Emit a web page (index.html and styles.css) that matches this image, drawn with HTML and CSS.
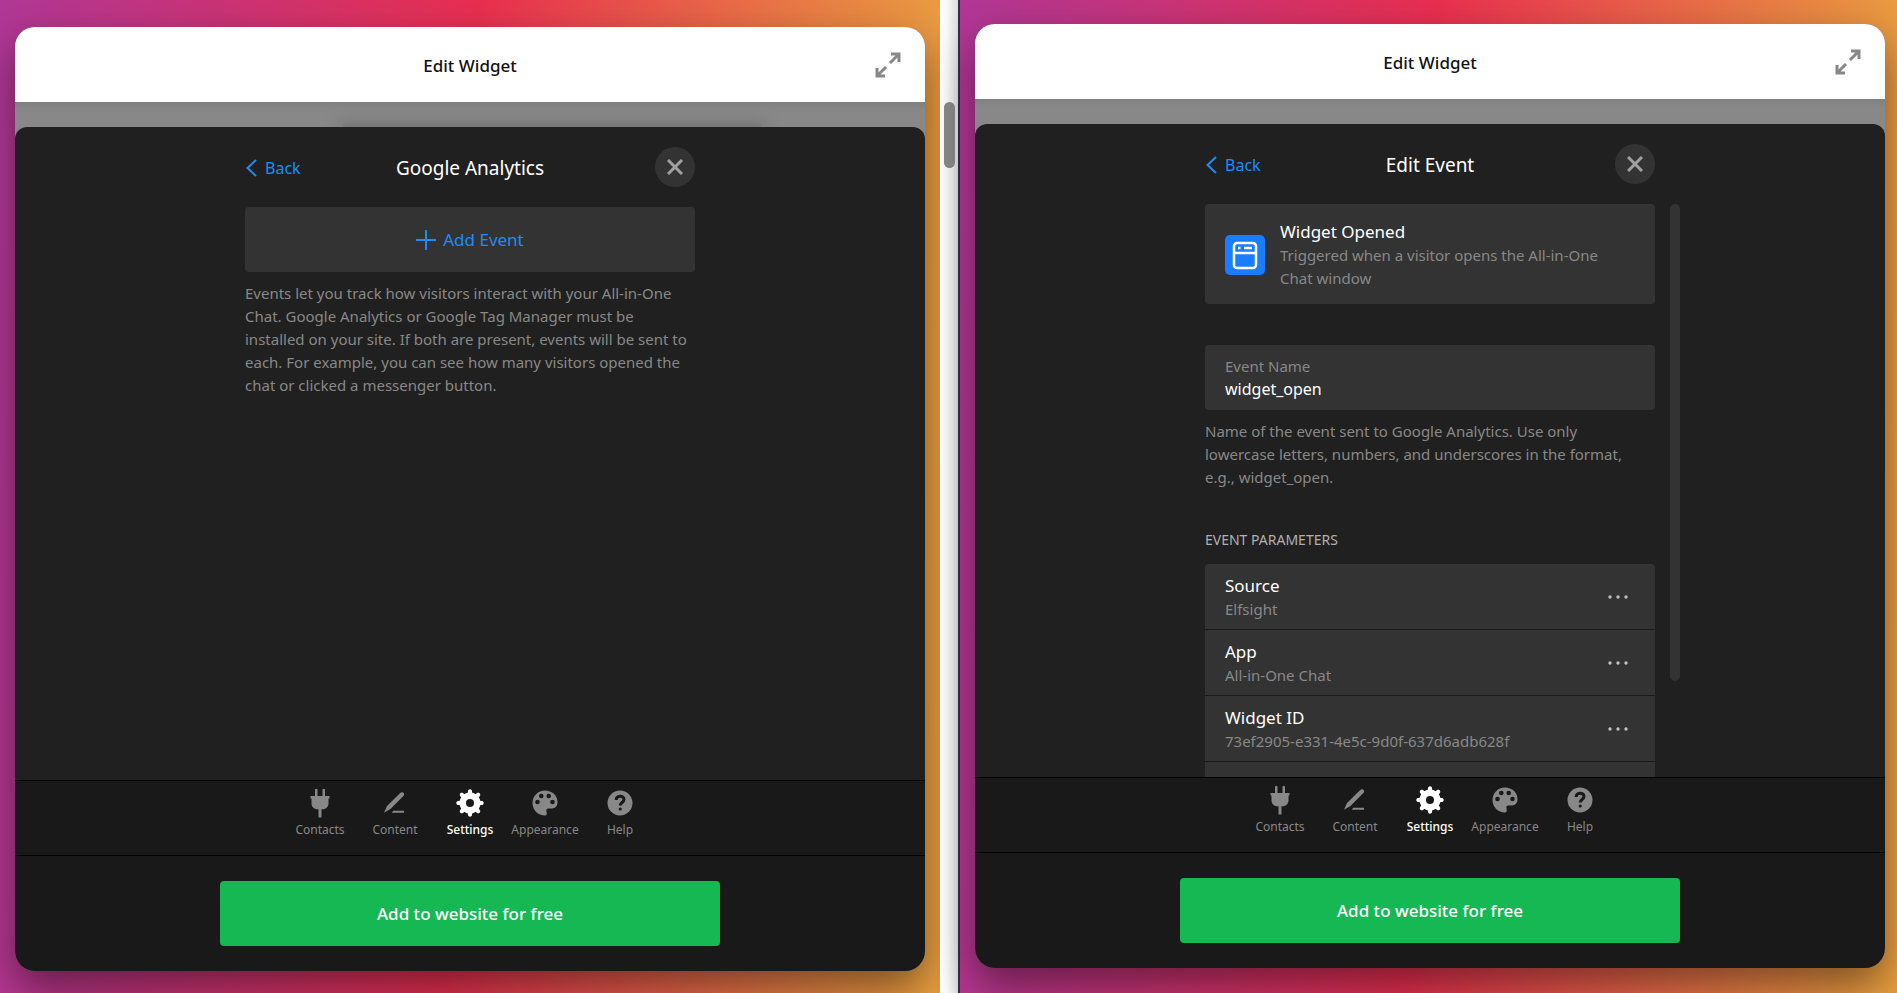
FILE: index.html
```html
<!DOCTYPE html>
<html lang="en">
<head>
    <meta charset="UTF-8">
    <meta name="viewport" content="width=device-width, initial-scale=1.0">
    <title>Edit Widget</title>
    <link rel="stylesheet" href="styles.css">
</head>
<body>
    <!-- icons used in both panels -->
    <svg class="sprite" aria-hidden="true">
        <symbol id="expand" viewBox="0 0 28 28">
            <path d="M16 12 25 3M17 3h8v8M12 16 3 25M3 17v8h8"/>
        </symbol>
        <symbol id="back" viewBox="0 0 11 18">
            <path d="M10 1 1.500 9 10 17"/>
        </symbol>
        <symbol id="close" viewBox="0 0 16 16">
            <path d="M1 1 15 15M15 1 1 15"/>
        </symbol>
        <symbol id="plus" viewBox="0 0 20 20">
            <path d="M10 0V20M0 10H20"/>
        </symbol>
        <symbol id="dots" viewBox="0 0 20 4">
            <circle cx="2" cy="2" r="1.700"/><circle cx="10" cy="2" r="1.700"/><circle cx="18" cy="2" r="1.700"/>
        </symbol>
        <symbol id="plug" viewBox="0 0 30 30">
            <path d="M10 1.500q1.250-1.500 2.500 0V8h5V1.500q1.250-1.500 2.500 0V8h4.500v2.500h-1V15c0 4-2 5.500-5 6.300h-2V29.500h-3V21.300h-2c-3-.8-5-2.300-5-6.300v-4.500h-1V8H10z"/>
        </symbol>
        <symbol id="pencil" viewBox="0 0 30 30">
            <path d="M20.500 4.800c2-1.900 5 .9 3.100 2.900L10.500 21 4 24.700l3-6.700zM13 22.800h11v2H12z"/>
        </symbol>
        <symbol id="gear" viewBox="0 0 30 30">
            <g><circle cx="15" cy="15" r="10.500"/>
            <path id="cog" d="M12.400 6l.9-4q1.700-1.600 3.400 0l.9 4zM12.400 24l.9 4q1.700 1.600 3.400 0l.9-4z"/>
            <use href="#cog" transform="rotate(45 15 15)"/>
            <use href="#cog" transform="rotate(90 15 15)"/>
            <use href="#cog" transform="rotate(135 15 15)"/></g>
            <circle class="hole" cx="15" cy="15" r="4"/>
        </symbol>
        <symbol id="palette" viewBox="0 0 30 30">
            <path d="M15 2.500C22 2.500 27.500 7.500 27.500 14c0 4.500-2.500 6.500-6.500 6.500h-2.500c-1.800 0-2.500 1.200-2 3 .5 2 .5 4-1.500 4C8 27.500 2.500 22 2.500 15S8 2.500 15 2.500z"/>
            <g class="hole"><circle cx="7.500" cy="14" r="2.300"/><circle cx="11.300" cy="8" r="2.300"/><circle cx="18.700" cy="8" r="2.300"/><circle cx="22.500" cy="14" r="2.300"/></g>
        </symbol>
        <symbol id="help" viewBox="0 0 30 30">
            <circle cx="15" cy="15" r="12.500"/>
            <path class="mark" d="M11.200 12c0-5 7.800-5 7.800-.5 0 3-3.800 3-3.800 6"/>
            <circle class="hole" cx="15.200" cy="21" r="1.600"/>
        </symbol>
    </svg>

    <section class="screen">
        <div class="widget">
            <header class="top">
                <h1>Edit Widget</h1>
                <button class="expand" aria-label="Expand"><svg class="line"><use href="#expand"/></svg></button>
            </header>
            <div class="backdrop backdrop-shade"></div>
            <main class="panel">
                <div class="bar">
                    <a class="back" href="#"><svg class="line"><use href="#back"/></svg>Back</a>
                    <h2>Google Analytics</h2>
                    <button class="close" aria-label="Close"><svg class="line"><use href="#close"/></svg></button>
                </div>
                <div class="content">
                    <button class="add-event"><svg class="line"><use href="#plus"/></svg>Add Event</button>
                    <p class="hint">Events let you track how visitors interact with your All-in-One Chat. Google Analytics or Google Tag Manager must be installed on your site. If both are present, events will be sent to each. For example, you can see how many visitors opened the chat or clicked a messenger button.</p>
                </div>
            </main>
            <nav class="tabs">
                <a href="#"><svg><use href="#plug"/></svg>Contacts</a>
                <a href="#"><svg><use href="#pencil"/></svg>Content</a>
                <a href="#" class="active"><svg><use href="#gear"/></svg>Settings</a>
                <a href="#"><svg><use href="#palette"/></svg>Appearance</a>
                <a href="#"><svg><use href="#help"/></svg>Help</a>
            </nav>
            <footer class="bottom">
                <button class="publish">Add to website for free</button>
            </footer>
        </div>
    </section>

    <div class="scrollbar"><div class="thumb"></div></div>

    <section class="screen screen-right">
        <div class="widget">
            <header class="top">
                <h1>Edit Widget</h1>
                <button class="expand" aria-label="Expand"><svg class="line"><use href="#expand"/></svg></button>
            </header>
            <div class="backdrop"></div>
            <main class="panel">
                <div class="bar">
                    <a class="back" href="#"><svg class="line"><use href="#back"/></svg>Back</a>
                    <h2>Edit Event</h2>
                    <button class="close" aria-label="Close"><svg class="line"><use href="#close"/></svg></button>
                </div>
                <div class="content">
                    <div class="event-card">
                        <svg class="event-icon" viewBox="0 0 40 40">
                            <rect width="40" height="40" rx="5" fill="#1a7cff"/>
                            <rect x="9" y="8" width="22" height="25" rx="3" fill="none" stroke="#fff" stroke-width="2.500"/>
                            <path d="M9 18H31M13 13h2.500M19 13h8" fill="none" stroke="#fff" stroke-width="2.500"/>
                        </svg>
                        <div>
                            <h3>Widget Opened</h3>
                            <p>Triggered when a visitor opens the All-in-One Chat window</p>
                        </div>
                    </div>
                    <div class="field">
                        <label for="event-name">Event Name</label>
                        <input type="text" id="event-name" value="widget_open">
                    </div>
                    <p class="hint">Name of the event sent to Google Analytics. Use only lowercase letters, numbers, and underscores in the format, e.g., widget_open.</p>
                    <h4>EVENT PARAMETERS</h4>
                    <ul class="params">
                        <li>
                            <div><h3>Source</h3><p>Elfsight</p></div>
                            <button class="more" aria-label="Source options"><svg><use href="#dots"/></svg></button>
                        </li>
                        <li>
                            <div><h3>App</h3><p>All-in-One Chat</p></div>
                            <button class="more" aria-label="App options"><svg><use href="#dots"/></svg></button>
                        </li>
                        <li>
                            <div><h3>Widget ID</h3><p>73ef2905-e331-4e5c-9d0f-637d6adb628f</p></div>
                            <button class="more" aria-label="Widget ID options"><svg><use href="#dots"/></svg></button>
                        </li>
                        <li></li>
                    </ul>
                    <div class="inner-thumb"></div>
                </div>
            </main>
            <nav class="tabs">
                <a href="#"><svg><use href="#plug"/></svg>Contacts</a>
                <a href="#"><svg><use href="#pencil"/></svg>Content</a>
                <a href="#" class="active"><svg><use href="#gear"/></svg>Settings</a>
                <a href="#"><svg><use href="#palette"/></svg>Appearance</a>
                <a href="#"><svg><use href="#help"/></svg>Help</a>
            </nav>
            <footer class="bottom">
                <button class="publish">Add to website for free</button>
            </footer>
        </div>
    </section>
</body>
</html>
```
FILE: styles.css
```css
*{
    margin: 0;
    padding: 0;
    box-sizing: border-box;
}

body{
    height: 100vh;
    display: flex;
    overflow: hidden;
    font-family: "Noto Sans", "Open Sans", sans-serif;
    font-size: 15px;
    line-height: 23px;
    color: #ffffff;
}
button, input{
    font-family: inherit;
    border: none;
    background: none;
}
button{
    cursor: pointer;
}
a{
    text-decoration: none;
}
ul{
    list-style: none;
}
h1, h2, h3, h4{
    font-weight: 400;
}
.sprite{
    display: none;
}
.line{
    fill: none;
    stroke: currentColor;
    stroke-width: 2;
}

/* screens */
.screen{
    flex: 1;
    min-width: 0;
    padding: 27px 15px 22px;
    background: linear-gradient(92deg, #b03796 0%, #e82f50 49%, #e99e40 98%);
}
.screen-right{
    padding: 24px 12px 25px 15px;
}
.widget{
    height: 100%;
    display: flex;
    flex-direction: column;
    border-radius: 20px;
    overflow: hidden;
    background-color: #888888;
    box-shadow: 0 18px 40px rgba(0, 0, 0, 0.45);
}

/* scrollbar between the screens */
.scrollbar{
    width: 20px;
    padding: 102px 4px 0;
    background: linear-gradient(90deg, #ffffff, #f8f8f8 40%, #dcdcdc);
    border-right: 2px solid #33303a;
}
.thumb{
    width: 11px;
    height: 66px;
    border-radius: 6px;
    background-color: #888888;
}

/* header */
.top{
    height: 75px;
    display: grid;
    grid-template-columns: 1fr auto 1fr;
    align-items: center;
    padding: 0 23px;
    background-color: #ffffff;
    color: #111111;
}
.top h1{
    grid-column: 2;
    padding-top: 2px;
    font-size: 17px;
    font-weight: 500;
}
.expand{
    justify-self: end;
    width: 28px;
    height: 28px;
    color: #888888;
}
.expand svg{
    width: 28px;
    height: 28px;
    stroke-width: 3;
}
.backdrop{
    height: 25px;
    overflow: hidden;
    background: linear-gradient(#808080, #888888 8px);
}
.backdrop-shade{
    padding-top: 22px;
}
.backdrop-shade::after{
    content: "";
    display: block;
    width: 46%;
    height: 10px;
    margin-left: 36%;
    background-color: #797979;
    box-shadow: 0 0 14px 4px #797979;
}

/* dark panel */
.panel{
    flex: 1;
    min-height: 0;
    display: flex;
    flex-direction: column;
    align-items: center;
    border-radius: 12px 12px 0 0;
    background-color: #202020;
    overflow: hidden;
}
.bar{
    flex-shrink: 0;
    width: 100%;
    max-width: 450px;
    height: 80px;
    display: grid;
    grid-template-columns: 1fr auto 1fr;
    align-items: center;
}
.bar h2{
    padding-top: 2px;
    font-size: 19px;
}
.back{
    display: flex;
    align-items: center;
    gap: 8px;
    padding: 2px 0 0 1px;
    font-size: 16px;
    color: #1f8cf5;
}
.back svg{
    width: 11px;
    height: 18px;
}
.close{
    justify-self: end;
    width: 40px;
    height: 40px;
    display: grid;
    place-items: center;
    border-radius: 50%;
    background-color: #333333;
    color: #a0a0a0;
}
.close svg{
    width: 16px;
    height: 16px;
    stroke-width: 3;
}
.content{
    position: relative;
    width: 100%;
    max-width: 450px;
}
.add-event{
    width: 100%;
    height: 65px;
    display: flex;
    justify-content: center;
    align-items: center;
    gap: 7px;
    border-radius: 4px;
    background-color: #333333;
    color: #1f8cf5;
    font-size: 17px;
}
.add-event svg{
    width: 20px;
    height: 20px;
}
.hint{
    padding: 10px 6px 0 0;
    color: #888888;
}

/* event form */
.event-card{
    height: 100px;
    display: flex;
    align-items: center;
    gap: 15px;
    padding: 2px 40px 0 20px;
    border-radius: 4px;
    background-color: #333333;
}
.event-icon{
    flex-shrink: 0;
    width: 40px;
    height: 40px;
}
h3{
    font-size: 17px;
    line-height: 24px;
}
.event-card p, .params p{
    color: #888888;
}
.field{
    height: 65px;
    display: flex;
    flex-direction: column;
    justify-content: center;
    margin-top: 41px;
    padding: 0 20px;
    border-radius: 4px;
    background-color: #333333;
}
.field label{
    color: #888888;
}
.field input{
    width: 100%;
    height: 22px;
    color: #ffffff;
    font-size: 16px;
    outline: none;
}
h4{
    margin-top: 39px;
    font-size: 14px;
    color: #b0b0b0;
}
.params{
    margin-top: 13px;
    border-radius: 4px 4px 0 0;
    background-color: #333333;
}
.params li{
    height: 66px;
    display: flex;
    justify-content: space-between;
    align-items: center;
    padding: 0 27px 0 20px;
    border-bottom: 1px solid #1a1a1a;
}
.params li div{
    padding-top: 2px;
}
.more{
    width: 20px;
    height: 20px;
    display: grid;
    place-items: center;
}
.more svg{
    width: 20px;
    height: 4px;
    fill: #c0c0c0;
}
.inner-thumb{
    position: absolute;
    top: 0;
    right: -25px;
    width: 10px;
    height: 477px;
    border-radius: 5px;
    background-color: #333333;
}

/* tabs and footer */
.tabs{
    height: 75px;
    display: flex;
    justify-content: center;
    background-color: #191919;
    border-top: 1px solid #000000;
}
.tabs a{
    width: 75px;
    display: flex;
    flex-direction: column;
    align-items: center;
    padding-top: 7px;
    font-size: 12px;
    color: #888888;
}
.tabs svg{
    width: 30px;
    height: 30px;
    fill: currentColor;
}
.tabs .active{
    color: #ffffff;
    font-weight: 500;
}
.hole{
    fill: #191919;
}
.mark{
    fill: none;
    stroke: #191919;
    stroke-width: 3px;
}
.bottom{
    height: 116px;
    display: flex;
    justify-content: center;
    align-items: center;
    background-color: #191919;
    border-top: 1px solid #000000;
}
.publish{
    width: 100%;
    max-width: 500px;
    height: 65px;
    border-radius: 4px;
    background-color: #15b853;
    color: #ffffff;
    font-size: 17px;
    font-weight: 500;
}
```
